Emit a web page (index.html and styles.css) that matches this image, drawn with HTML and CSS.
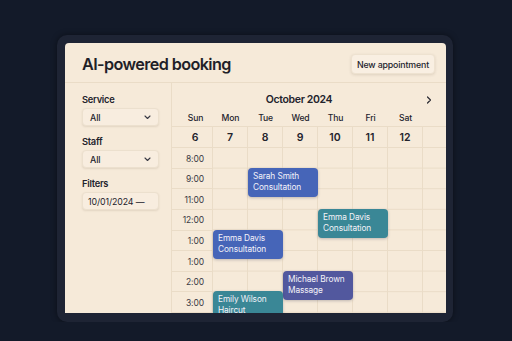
FILE: index.html
```html
<!DOCTYPE html>
<html lang="en">
<head>
    <meta charset="UTF-8">
    <meta name="viewport" content="width=device-width, initial-scale=1.0">
    <title>AI-powered booking</title>
    <link rel="stylesheet" href="styles.css">
</head>
<body>
    <div class="screen">
    <div class="panel">
        <header class="topbar">
            <h1 class="title">AI-powered booking</h1>
            <button class="btn-new">New appointment</button>
        </header>

        <div class="main">
            <!-- Filtros -->
            <aside class="sidebar">
                <div class="field">
                    <label class="field-label">Service</label>
                    <div class="select">All <span class="caret"><svg width="7" height="5" viewBox="0 0 7 5"><path d="M1 1l2.5 2.5L6 1" fill="none" stroke="#3a3a44" stroke-width="1.1" stroke-linecap="round" stroke-linejoin="round"/></svg></span></div>
                </div>
                <div class="field">
                    <label class="field-label">Staff</label>
                    <div class="select">All <span class="caret"><svg width="7" height="5" viewBox="0 0 7 5"><path d="M1 1l2.5 2.5L6 1" fill="none" stroke="#3a3a44" stroke-width="1.1" stroke-linecap="round" stroke-linejoin="round"/></svg></span></div>
                </div>
                <div class="field">
                    <label class="field-label">Filters</label>
                    <div class="select date">10/01/2024 —</div>
                </div>
            </aside>

            <!-- Calendario -->
            <section class="calendar">
                <div class="month">
                    <span class="month-title">October 2024</span>
                    <svg class="next" width="6" height="8" viewBox="0 0 6 8"><path d="M1.5 1l3 3-3 3" fill="none" stroke="#2b2b33" stroke-width="1.2" stroke-linecap="round" stroke-linejoin="round"/></svg>
                </div>

                <div class="week-row daynames">
                    <div class="first">Sun</div>
                    <div>Mon</div>
                    <div>Tue</div>
                    <div>Wed</div>
                    <div>Thu</div>
                    <div>Fri</div>
                    <div>Sat</div>
                    <div></div>
                </div>

                <div class="week-row dates">
                    <div class="first">6</div>
                    <div>7</div>
                    <div>8</div>
                    <div>9</div>
                    <div>10</div>
                    <div>11</div>
                    <div>12</div>
                    <div></div>
                </div>

                <div class="cal-body">
                    <div class="times">
                        <div class="time">8:00</div>
                        <div class="time">9:00</div>
                        <div class="time">11:00</div>
                        <div class="time">12:00</div>
                        <div class="time">1:00</div>
                        <div class="time">1:00</div>
                        <div class="time">2:00</div>
                        <div class="time">3:00</div>
                    </div>
                    <div class="slots">
                        <div class="event blue" style="grid-column: 2 / span 2; grid-row: 3;">Sarah Smith<br>Consultation</div>
                        <div class="event teal" style="grid-column: 4 / span 2; grid-row: 7;">Emma Davis<br>Consultation</div>
                        <div class="event blue" style="grid-column: 1 / span 2; grid-row: 9;">Emma Davis<br>Consultation</div>
                        <div class="event purple" style="grid-column: 3 / span 2; grid-row: 13;">Michael Brown<br>Massage</div>
                        <div class="event teal" style="grid-column: 1 / span 2; grid-row: 15;">Emily Wilson<br>Haircut</div>
                    </div>
                </div>
            </section>
        </div>
    </div>
    </div>
</body>
</html>
```

FILE: styles.css
```css
/* Estilos generales */
body {
    margin: 0;
    background-color: #131a29;
    font-family: Inter, "Noto Sans", sans-serif;
    color: #23232c;
}

/* Marco oscuro */
.screen {
    box-sizing: border-box;
    width: 396px;
    height: 287px;
    margin: 35px 0 0 57px;
    padding: 8px 7px 9px 8px;
    background-color: #1e2434;
    border-radius: 10px;
    box-shadow: 0 0 6px rgba(0, 0, 0, 0.45);
}

.panel {
    height: 100%;
    background-color: #f6ead9;
    border-radius: 4px 4px 0 0;
    overflow: hidden;
    display: flex;
    flex-direction: column;
}

/* Cabecera */
.topbar {
    box-sizing: border-box;
    height: 40px;
    flex-shrink: 0;
    display: flex;
    align-items: center;
    justify-content: space-between;
    padding: 3px 11px 0 17px;
    border-bottom: 1px solid #eadcc7;
}

.title {
    margin: 0;
    font-size: 16.2px;
    font-weight: 600;
    letter-spacing: -0.6px;
    color: #1f1f28;
}

.btn-new {
    height: 20px;
    width: 84px;
    padding: 0;
    font-family: inherit;
    font-size: 8.8px;
    font-weight: 500;
    letter-spacing: -0.15px;
    color: #23232c;
    background-color: #f9efe2;
    border: 1px solid #eee2d0;
    border-radius: 4px;
    box-shadow: 0 1px 3px rgba(60, 40, 10, 0.12);
}

.main {
    flex: 1;
    display: flex;
    min-height: 0;
}

/* Barra lateral */
.sidebar {
    box-sizing: border-box;
    width: 107px;
    flex-shrink: 0;
    padding: 10px 0 0 17px;
    border-right: 1px solid #eadcc7;
    display: flex;
    flex-direction: column;
    gap: 9px;
}

.field-label {
    display: block;
    font-size: 9.3px;
    line-height: 13px;
    font-weight: 600;
    letter-spacing: -0.25px;
    margin-bottom: 2px;
}

.select {
    box-sizing: border-box;
    width: 77px;
    height: 18px;
    display: flex;
    align-items: center;
    justify-content: space-between;
    padding: 0 7px 0 7px;
    font-size: 8.8px;
    font-weight: 500;
    letter-spacing: -0.1px;
    background-color: #f8eddf;
    border: 1px solid #ece0ce;
    border-radius: 4px;
    box-shadow: 0 1px 2px rgba(60, 40, 10, 0.1);
}

.select.date {
    padding-left: 5px;
    font-weight: 400;
}

.caret {
    display: flex;
}

/* Calendario */
.calendar {
    flex: 1;
    display: flex;
    flex-direction: column;
}

.month {
    display: flex;
    align-items: center;
    padding: 10px 14px 0 0;
    height: 14px;
}

.month-title {
    flex: 1;
    text-align: center;
    font-size: 10.5px;
    font-weight: 600;
    letter-spacing: -0.35px;
}

.week-row {
    display: grid;
    grid-template-columns: 41px repeat(6, 35px) 1fr;
    text-align: center;
}

.week-row .first {
    padding-left: 6px;
}

.daynames {
    margin-top: 6px;
    padding-bottom: 1px;
    line-height: 13px;
    font-size: 8.6px;
    font-weight: 500;
    letter-spacing: -0.15px;
    border-bottom: 1px solid #eadcc7;
}

.dates div {
    box-sizing: border-box;
    height: 21px;
    padding-top: 1px;
    line-height: 20px;
    font-size: 10.5px;
    font-weight: 600;
    border-right: 1px solid #eadcc7;
    border-bottom: 1px solid #eadcc7;
}

.dates div:last-child {
    border-right: none;
}

.cal-body {
    display: flex;
}

.times {
    box-sizing: border-box;
    width: 41px;
    flex-shrink: 0;
    border-right: 1px solid #eadcc7;
}

.time {
    box-sizing: border-box;
    height: 20.6px;
    padding: 1px 8px 0 0;
    display: flex;
    align-items: center;
    justify-content: flex-end;
    font-size: 8.5px;
    letter-spacing: -0.1px;
    color: #3a3943;
    border-bottom: 1px solid #eadcc7;
}

.slots {
    flex: 1;
    display: grid;
    grid-template-columns: repeat(6, 35px) 1fr;
    grid-auto-rows: 10.3px;
    background-image:
        linear-gradient(to left, #eadcc7 1px, transparent 1px),
        linear-gradient(to top, #eadcc7 1px, transparent 1px);
    background-size: 35px 100%, 100% 20.6px;
}

/* Citas */
.event {
    box-sizing: border-box;
    height: 29px;
    margin-top: -1px;
    padding: 3px 5px;
    font-size: 8.3px;
    line-height: 11px;
    letter-spacing: -0.1px;
    color: #f4f2f8;
    border-radius: 4px;
    box-shadow: 0 1px 3px rgba(30, 30, 60, 0.25);
    white-space: nowrap;
    z-index: 1;
}

.event.blue {
    background-color: #4665b8;
}

.event.teal {
    background-color: #3a8796;
}

.event.purple {
    background-color: #52589e;
}
```
